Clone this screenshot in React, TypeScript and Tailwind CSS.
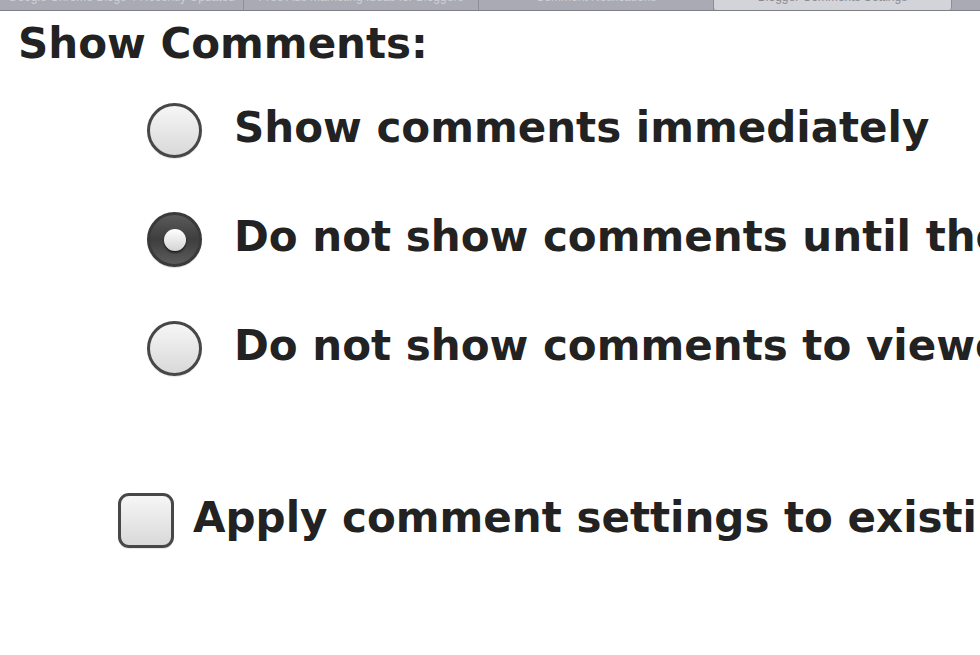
import React from "react";

const font = { fontFamily: '"DejaVu Sans", Verdana, sans-serif' };

function Radio({ checked }: { checked?: boolean }) {
  if (checked) {
    return (
      <div className="w-[55px] h-[55px] shrink-0 rounded-full border-[3px] border-[#3a3a3a] bg-gradient-to-b from-[#5a5a5a] via-[#3e3e3e] to-[#5c5c5c] flex items-center justify-center shadow-[0_1px_1px_rgba(0,0,0,0.15)]">
        <div className="w-[22px] h-[22px] rounded-full bg-gradient-to-b from-[#ffffff] to-[#d4d4d4] shadow-[0_2px_2px_rgba(0,0,0,0.6)]" />
      </div>
    );
  }
  return (
    <div className="w-[55px] h-[55px] shrink-0 rounded-full border-[3px] border-[#474747] bg-gradient-to-b from-[#f6f6f6] to-[#d9d9d9] shadow-[0_1px_1px_rgba(0,0,0,0.1)]" />
  );
}

function Tab({ w, label, active }: { w: string; label: string; active?: boolean }) {
  return (
    <div
      className={`${w} h-[10px] overflow-hidden border-r border-[#8d8e96] ${
        active ? "bg-[#d3d4da] rounded-b-[3px]" : "bg-[#a9aab3]"
      } flex justify-center`}
    >
      <span
        className={`text-[12px] leading-[12px] -mt-[9px] whitespace-nowrap ${
          active ? "text-[#8a8b92]" : "text-[#cfd0d6]"
        }`}
        style={{ fontFamily: '"Liberation Sans", Arial, sans-serif' }}
      >
        {label}
      </span>
    </div>
  );
}

export default function App() {
  return (
    <div className="w-[980px] h-[655px] overflow-hidden bg-white text-[#222222]" style={font}>
      <div className="flex h-[11px] bg-[#a9aab3] border-b border-[#7d7e86]">
        <Tab w="w-[244px]" label="Google Chrome Blogs 4 Recently Updated" />
        <Tab w="w-[235px]" label="Free Ads Marketing Ideas for Bloggers" />
        <Tab w="w-[235px]" label="Comment Notifications" />
        <Tab w="w-[238px]" label="Blogger Comments Settings" active />
        <div className="flex-1" />
      </div>

      <div className="pl-[18px] pt-[12px]">
        <div className="text-[42px] leading-[42px] font-bold whitespace-nowrap">Show Comments:</div>
      </div>

      <div className="flex flex-col gap-[54px] pl-[147px] mt-[38px]">
        {[
          { label: "Show comments immediately", checked: false },
          { label: "Do not show comments until they are approved", checked: true },
          { label: "Do not show comments to viewers", checked: false },
        ].map((o, i) => (
          <div key={i} className="flex items-center gap-[32px] h-[55px]">
            <Radio checked={o.checked} />
            <span className="text-[42px] leading-[42px] font-bold whitespace-nowrap -mt-[6px]">{o.label}</span>
          </div>
        ))}
      </div>

      <div className="flex items-center gap-[19px] pl-[118px] mt-[117px] h-[55px]">
        <div className="w-[56px] h-[55px] shrink-0 rounded-[11px] border-[3px] border-[#474747] bg-gradient-to-b from-[#f6f6f6] to-[#d9d9d9] shadow-[0_1px_1px_rgba(0,0,0,0.1)]" />
        <span className="text-[42px] leading-[42px] font-bold whitespace-nowrap -mt-[6px]">
          Apply comment settings to existing posts
        </span>
      </div>
    </div>
  );
}
